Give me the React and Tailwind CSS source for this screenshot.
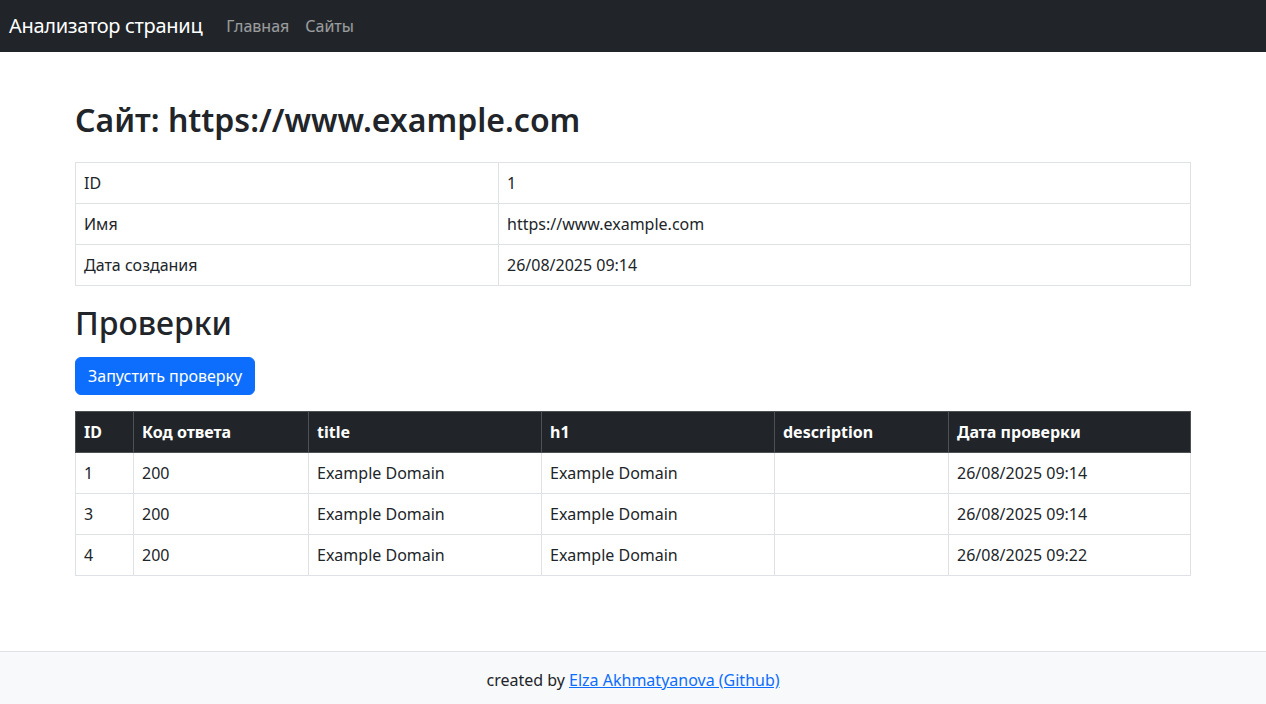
import React from 'react';

const checks = [
    { id: 1, code: 200, title: 'Example Domain', h1: 'Example Domain', description: '', date: '26/08/2025 09:14' },
    { id: 3, code: 200, title: 'Example Domain', h1: 'Example Domain', description: '', date: '26/08/2025 09:14' },
    { id: 4, code: 200, title: 'Example Domain', h1: 'Example Domain', description: '', date: '26/08/2025 09:22' },
];

function App() {
    return (
        <div className="min-h-screen flex flex-col bg-white text-[#212529] font-['Noto_Sans',sans-serif] text-base leading-6">
            <nav className="h-[52px] bg-[#212529] flex items-center px-[9px]">
                <a href="#" className="text-white text-[20px] leading-[30px] tracking-[-0.3px] mr-[24px]">Анализатор страниц</a>
                <a href="#" className="text-white/55 mr-[16px]">Главная</a>
                <a href="#" className="text-white/55">Сайты</a>
            </nav>

            <main className="w-full max-w-[1140px] mx-auto px-3 pt-[49px] pb-[48px]">
                <h1 className="text-[32px] leading-[38px] font-semibold mb-[23px]">Сайт: https://www.example.com</h1>
                <table className="w-full border-collapse border border-[#dee2e6] mb-[18px]">
                    <tbody>
                        <tr>
                            <td className="border border-[#dee2e6] px-2 py-2 w-[423px]">ID</td>
                            <td className="border border-[#dee2e6] px-2 py-2">1</td>
                        </tr>
                        <tr>
                            <td className="border border-[#dee2e6] px-2 py-2">Имя</td>
                            <td className="border border-[#dee2e6] px-2 py-2">https://www.example.com</td>
                        </tr>
                        <tr>
                            <td className="border border-[#dee2e6] px-2 py-2">Дата создания</td>
                            <td className="border border-[#dee2e6] px-2 py-2">26/08/2025 09:14</td>
                        </tr>
                    </tbody>
                </table>

                <h2 className="text-[32px] leading-[38px] font-medium mb-[15px]">Проверки</h2>
                <button className="bg-[#0d6efd] text-white rounded-md px-3 py-[6px] border border-[#0d6efd] mb-[16px]">
                    Запустить проверку
                </button>

                <table className="w-full border-collapse border border-[#dee2e6]">
                    <thead>
                        <tr className="bg-[#212529] text-white font-bold text-left">
                            <th className="border border-[#4d5154] px-2 py-2 w-[58px]">ID</th>
                            <th className="border border-[#4d5154] px-2 py-2 w-[175px]">Код ответа</th>
                            <th className="border border-[#4d5154] px-2 py-2 w-[233px]">title</th>
                            <th className="border border-[#4d5154] px-2 py-2 w-[233px]">h1</th>
                            <th className="border border-[#4d5154] px-2 py-2 w-[174px]">description</th>
                            <th className="border border-[#4d5154] px-2 py-2">Дата проверки</th>
                        </tr>
                    </thead>
                    <tbody>
                        {checks.map((c) => (
                            <tr key={c.id}>
                                <td className="border border-[#dee2e6] px-2 py-2">{c.id}</td>
                                <td className="border border-[#dee2e6] px-2 py-2">{c.code}</td>
                                <td className="border border-[#dee2e6] px-2 py-2">{c.title}</td>
                                <td className="border border-[#dee2e6] px-2 py-2">{c.h1}</td>
                                <td className="border border-[#dee2e6] px-2 py-2">{c.description}</td>
                                <td className="border border-[#dee2e6] px-2 py-2">{c.date}</td>
                            </tr>
                        ))}
                    </tbody>
                </table>
            </main>

            <footer className="mt-auto h-[53px] border-t border-[#dee2e6] bg-[#f8f9fa] flex items-center justify-center pt-[4px]">
                <span>
                    created by{' '}
                    <a href="#" className="text-[#0d6efd] underline">Elza Akhmatyanova (Github)</a>
                </span>
            </footer>
        </div>
    );
}

export default App;
